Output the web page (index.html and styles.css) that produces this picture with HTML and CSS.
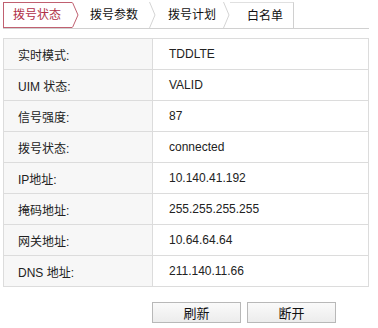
FILE: index.html
```html
<!DOCTYPE html>
<html lang="zh">
<head>
<meta charset="utf-8">
<link rel="stylesheet" href="styles.css">
</head>
<body>
<div class="page">
  <div class="tabs">
    <div class="tab active"><span class="tab-label">拨号状态</span><svg class="chev" width="7" height="26" viewBox="0 0 7 26"><polyline points="0.5,0.5 6,13 0.5,25.5" fill="#fff" stroke="#c06070" stroke-width="1"/></svg></div>
    <div class="tab"><span class="tab-label">拨号参数</span><svg class="chev" width="7" height="26" viewBox="0 0 7 26"><polyline points="0.5,0 6,13 0.5,26" fill="none" stroke="#d4d4d4" stroke-width="1"/></svg></div>
    <div class="tab"><span class="tab-label">拨号计划</span><svg class="chev" width="7" height="26" viewBox="0 0 7 26"><polyline points="0.5,0 6,13 0.5,26" fill="none" stroke="#d4d4d4" stroke-width="1"/></svg></div>
    <div class="tab last"><span class="tab-label">白名单</span></div>
  </div>
  <div class="table">
    <div class="row"><div class="label">实时模式:</div><div class="value">TDDLTE</div></div>
    <div class="row"><div class="label">UIM 状态:</div><div class="value">VALID</div></div>
    <div class="row"><div class="label">信号强度:</div><div class="value">87</div></div>
    <div class="row"><div class="label">拨号状态:</div><div class="value">connected</div></div>
    <div class="row"><div class="label">IP地址:</div><div class="value">10.140.41.192</div></div>
    <div class="row"><div class="label">掩码地址:</div><div class="value">255.255.255.255</div></div>
    <div class="row"><div class="label">网关地址:</div><div class="value">10.64.64.64</div></div>
    <div class="row"><div class="label">DNS 地址:</div><div class="value">211.140.11.66</div></div>
  </div>
  <div class="actions">
    <button class="btn">刷新</button>
    <button class="btn">断开</button>
  </div>
</div>
</body>
</html>
```
FILE: styles.css
```css
* { box-sizing: border-box; }
html, body { margin: 0; padding: 0; background: #fff; }
body {
  font-family: "Liberation Sans", "Noto Sans CJK SC", Arial, sans-serif;
  font-size: 12px;
  color: #222;
}
.page {
  padding: 2px 9px 0 3px;
}
.tabs {
  display: flex;
  align-items: stretch;
  height: 26px;
  border-bottom: 1px solid #d0d0d0;
  box-sizing: content-box;
}
.tab {
  display: flex;
  align-items: stretch;
  height: 26px;
}
.tab-label {
  display: flex;
  align-items: center;
  padding: 0 11px 0 11px;
  line-height: 1;
  color: #111;
}
.tab .chev { display: block; flex: none; }
.tab.active .tab-label {
  border: 1px solid #c06070;
  border-right: none;
  color: #b03048;
  padding: 0 0 0 9px;
  width: 69px;
}
.tab.active { margin-bottom: -1px; height: 26px; }
.tab:nth-child(3) .tab-label { padding-left: 12px; padding-right: 7px; }
.tab.last .tab-label {
  padding: 0 10px 0 17px;
  border-right: 1px solid #d0d0d0;
  border-top: 1px solid #e0e0e0;
  height: 26px;
}
.table {
  margin-top: 9px;
  border: 1px solid #dcdcdc;
  width: 366px;
}
.row {
  display: flex;
  height: 31px;
  border-bottom: 1px solid #dcdcdc;
}
.row:last-child { border-bottom: none; height: 30px; }
.label {
  width: 149px;
  flex: none;
  display: flex;
  align-items: center;
  padding-left: 14px;
  background: #f7f7f7;
  border-right: 1px solid #dcdcdc;
  color: #222;
}
.value {
  flex: 1;
  display: flex;
  align-items: center;
  padding-left: 16px;
  color: #222;
}
.actions {
  display: flex;
  gap: 6px;
  margin-top: 15px;
  padding-left: 149px;
}
.btn {
  width: 89px;
  height: 21px;
  border: 1px solid #b8b8b8;
  background: linear-gradient(#fafafa, #ececec);
  font-family: "Noto Sans CJK SC", "Liberation Sans", sans-serif;
  font-size: 13px;
  color: #111;
  padding: 0;
  line-height: 19px;
  border-radius: 0;
}
```
